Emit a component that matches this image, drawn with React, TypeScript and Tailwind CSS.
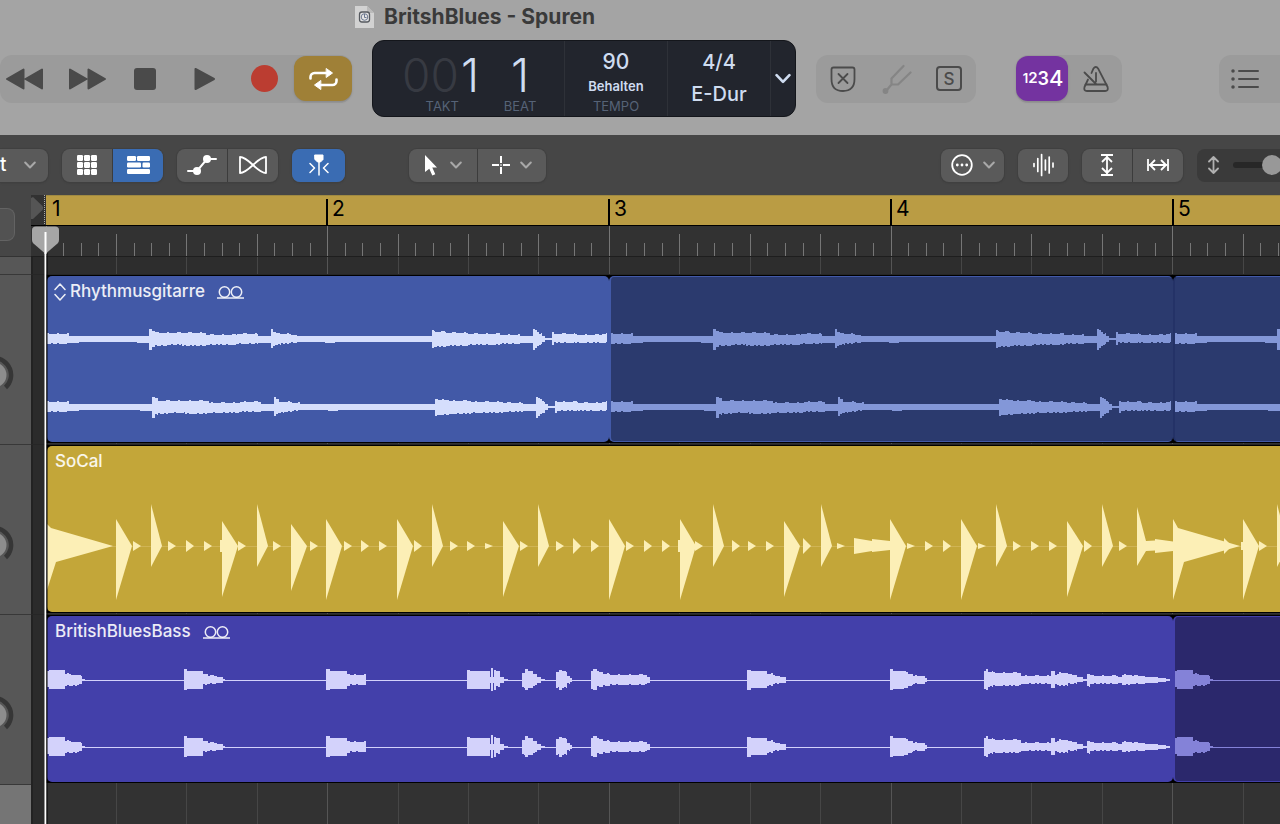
import type { ReactNode } from 'react'
import clsx from 'clsx'

type Step = [end: number, up: number, down: number]

const BEAT = 70.42

// Each step runs up to `end`, with a height above and below the centre line.
const GUITAR: Step[] = [
  [2, 5, 6], [22, 5, 5], [32, 3, 4], [90, 3, 3], [102, 3, 4], [105, 10, 11], [108, 8, 8],
  [120, 6, 7], [135, 6, 6], [159, 6, 7], [190, 4, 6], [211, 5, 5], [224, 3, 4], [226, 10, 9],
  [229, 7, 7], [234, 5, 6], [242, 5, 5], [250, 4, 4], [278, 3, 3], [288, 3, 4], [385, 3, 3],
  [388, 8, 9], [399, 7, 8], [421, 6, 7], [453, 5, 6], [473, 4, 5], [486, 3, 4], [488, 10, 11],
  [490, 9, 9], [492, 7, 7], [495, 5, 6], [498, 3, 3], [505, 1, 1], [507, 6, 6], [528, 5, 4],
  [555, 4, 4], [560, 5, 4],
]

const BASS: Step[] = [
  [2, 8, 8], [18, 10, 9], [22, 6, 6], [32, 5, 6], [35, 4, 4], [38, 1, 1], [137, 0, 1],
  [140, 11, 10], [156, 9, 9], [161, 6, 5], [170, 4, 4], [176, 3, 3], [178, 1, 1], [279, 0, 1],
  [283, 11, 10], [300, 9, 9], [303, 6, 6], [319, 5, 5], [420, 0, 1], [423, 10, 9], [443, 9, 9],
  [444, 3, 3], [446, 12, 11], [447, 3, 3], [449, 10, 10], [453, 8, 7], [457, 3, 3], [461, 1, 1],
  [475, 0, 1], [478, 7, 8], [481, 11, 10], [486, 9, 8], [490, 6, 6], [494, 3, 3], [498, 1, 1],
  [509, 0, 1], [512, 8, 8], [515, 10, 10], [520, 8, 8], [523, 4, 4], [525, 2, 2], [544, 0, 1],
  [546, 9, 9], [550, 11, 10], [556, 8, 7], [563, 6, 6], [578, 5, 5], [600, 5, 5], [603, 3, 3],
  [700, 0, 1], [704, 10, 10], [720, 9, 8], [726, 6, 6], [733, 4, 4], [739, 3, 3], [843, 0, 1],
  [846, 11, 10], [857, 9, 9], [861, 8, 8], [866, 6, 6], [878, 4, 4], [880, 2, 2], [937, 0, 1],
  [939, 9, 9], [941, 11, 10], [946, 8, 7], [974, 7, 6], [1004, 4, 4], [1008, 9, 8], [1012, 5, 5],
  [1021, 7, 6], [1030, 5, 4], [1036, 3, 2], [1040, 1, 1], [1043, 6, 7], [1071, 4, 4],
  [1075, 3, 3], [1085, 5, 5], [1098, 4, 4], [1111, 3, 3], [1119, 2, 2], [1123, 1, 1],
]

// x, top and bottom of each hit, measured from the region's left edge and centre line
const KICKS = [
  [69, 27, 54], [175, 25, 51], [244, 22, 45], [279, 27, 54], [350, 27, 54], [456, 25, 51],
  [562, 27, 54], [633, 27, 54], [737, 25, 51], [843, 27, 54], [914, 27, 54], [1020, 25, 51],
  [1196, 27, 54],
]
const SNARES = [104, 210, 385, 491, 666, 774, 949, 1055, 1230]
const HATS = [
  [86, 5], [121, 5], [139, 6], [157, 5], [191, 5], [226, 5], [263, 5], [297, 5], [314, 6],
  [332, 5], [367, 6], [403, 5], [420, 5], [438, 3], [473, 5], [509, 5], [526, 8], [544, 6],
  [579, 5], [597, 6], [615, 6], [648, 5], [685, 6], [701, 5], [719, 5], [756, 8], [790, 3],
  [860, 3], [878, 5], [896, 6], [931, 3], [966, 5], [984, 5], [1002, 5], [1037, 6], [1072, 5],
  [1177, 8], [1212, 5],
]

function wavePath(steps: Step[], cy: number, shift = 0) {
  const top: string[] = []
  const bottom: string[] = []
  let x = 0
  for (const [rawEnd, up, down] of steps) {
    const end = rawEnd > 32 && rawEnd < 550 ? rawEnd + shift : rawEnd
    while (x < end) {
      const next = Math.min(x + 2, end)
      const rough = up > 3 && up < 9
      const u = up + (rough && (x * 7919) % 11 < 3 ? 1 : 0)
      const d = down + (rough && (x * 6101) % 13 < 4 ? -1 : 0)
      top.push(`L${x} ${cy - u}L${next} ${cy - u}`)
      bottom.unshift(`L${next} ${cy + d}L${x} ${cy + d}`)
      x = next
    }
  }
  return `M0 ${cy}${top.join('')}${bottom.join('')}Z`
}

interface WaveformProps {
  steps: Step[]
  centre: number
  className: string
  shift?: number
}

function Waveform({ steps, centre, className, shift = 0 }: WaveformProps) {
  return (
    <svg className={clsx('absolute left-0 h-[166px] w-full', className)} fill="currentColor" aria-hidden="true">
      <path d={wavePath(steps, centre)} />
      <path d={wavePath(steps, 131, shift)} />
    </svg>
  )
}

function DrumWaveform() {
  return (
    <svg className="absolute inset-0 h-full w-full text-[#fcefb6]" fill="currentColor" aria-hidden="true">
      <path d="M0 100.500H1300" stroke="#d0b455" strokeWidth="1" />
      <path d="M0 78 4 82 66 100 9 116 0 144Z" />
      {KICKS.map(([x, up, down]) => (
        <path key={x} d={`M${x} ${100 - up}L${x + 16} 100L${x} ${100 + down}Z`} />
      ))}
      {SNARES.map((x) => (
        <path key={x} d={`M${x} 58L${x + 11} 100L${x} 121Z`} />
      ))}
      {HATS.map(([x, h]) => (
        <path key={x} d={`M${x} ${100 - h}L${x + 8} 100L${x} ${100 + h}Z`} />
      ))}
      <path d="M173 94h3v12h-3ZM631 94h3v12h-3ZM1194 96h3v8h-3Z" />
      <path d="M807 92 825 95V93L843 95V104L825 106V105L807 108Z" />
      <path d="M1090 61 1099 95 1108 94.500V93L1126 95.500V105L1108 107V104.500L1099 105 1090 120Z" />
      <path d="M1126 73 1131 82 1193 100 1137 116 1126 154Z" />
    </svg>
  )
}

function Chevron({ className }: { className?: string }) {
  return (
    <svg className={clsx('h-2 w-3', className)} viewBox="0 0 12 8" fill="none" stroke="currentColor" strokeWidth="2" strokeLinecap="round" strokeLinejoin="round">
      <path d="M1.200 1.500 6 6.500 10.800 1.500" />
    </svg>
  )
}

function LoopIcon() {
  return (
    <svg className="h-4 w-[27px]" viewBox="0 0 27 16" fill="none" stroke="currentColor" strokeWidth="1.500" aria-hidden="true">
      <circle cx="7.500" cy="8" r="5.200" />
      <circle cx="19.500" cy="8" r="5.200" />
      <path d="M0 14h27" />
    </svg>
  )
}

function IconButton({ label, className, children }: { label: string; className?: string; children?: ReactNode }) {
  return (
    <button type="button" aria-label={label} className={clsx('flex shrink-0 items-center justify-center', className)}>
      {children}
    </button>
  )
}

function Transport() {
  return (
    <div className="flex h-12 w-[352px] shrink-0 items-center rounded-xl bg-[#9b9b9b] text-[#4a4a4a]">
      <IconButton label="Zurückspulen" className="h-full w-[58px] justify-start pl-1.5">
        <svg className="h-[22px] w-[37px]" viewBox="0 0 37 22" fill="currentColor" stroke="currentColor" strokeWidth="2" strokeLinejoin="round">
          <path d="M1 11 17.500 1.500v19ZM19.500 11 36 1.500v19Z" />
        </svg>
      </IconButton>
      <IconButton label="Vorspulen" className="h-full w-[58px]">
        <svg className="h-[22px] w-[37px]" viewBox="0 0 37 22" fill="currentColor" stroke="currentColor" strokeWidth="2" strokeLinejoin="round">
          <path d="M17.500 11 1 1.500v19ZM36 11 19.500 1.500v19Z" />
        </svg>
      </IconButton>
      <IconButton label="Stopp" className="h-full w-[58px]">
        <span className="size-[22px] rounded-[3px] bg-[#4a4a4a]" />
      </IconButton>
      <IconButton label="Wiedergabe" className="h-full w-[61px]">
        <svg className="h-[22px] w-[21px]" viewBox="0 0 21 22" fill="currentColor" stroke="currentColor" strokeWidth="2" strokeLinejoin="round">
          <path d="M20 11 1.500 1v20Z" />
        </svg>
      </IconButton>
      <IconButton label="Aufnahme" className="h-full w-[59px]">
        <span className="size-[27px] rounded-full bg-[#bb3d31]" />
      </IconButton>
      <IconButton label="Cycle" className="h-[45px] w-[58px] rounded-xl bg-[#9f8037] text-white shadow">
        <svg className="h-6 w-[29px]" viewBox="0 0 29 24" fill="none" stroke="currentColor" strokeWidth="2.600" strokeLinecap="round" strokeLinejoin="round">
          <path d="M1.500 11.500V10a4 4 0 0 1 4-4H18M27.500 12.500V14a4 4 0 0 1-4 4H11" />
          <path d="M17.500 1.700 23.500 6 17.500 10.300ZM11.500 13.700 5.500 18 11.500 22.300Z" fill="currentColor" strokeWidth="1" />
        </svg>
      </IconButton>
    </div>
  )
}

function Display() {
  return (
    <div className="flex h-[77px] w-[424px] shrink-0 rounded-xl border border-[#14161b] bg-[#22252d] text-[#cfdcf0]">
      <div className="flex w-[192px] border-r border-[#2e3138] pt-[11px]">
        <div className="flex w-[108px] flex-col items-end">
          <div className="flex gap-0.5 pr-0.5 text-[46px] leading-[46px] font-light">
            <span className="text-[#373a42]">00</span>
            <span>1</span>
          </div>
          <span className="pr-[22px] text-[13px] leading-4 text-[#566377]">TAKT</span>
        </div>
        <div className="flex w-[78px] flex-col items-center">
          <div className="text-[46px] leading-[46px] font-light">1</div>
          <span className="text-[13px] leading-4 text-[#566377]">BEAT</span>
        </div>
      </div>
      <div className="flex w-[103px] flex-col items-center border-r border-[#2e3138] pt-[9px]">
        <span className="text-[21px] leading-6 font-medium">90</span>
        <span className="text-[13px] leading-6 font-semibold">Behalten</span>
        <span className="text-[13px] leading-4 text-[#566377]">TEMPO</span>
      </div>
      <div className="flex w-[103px] flex-col items-center gap-2 border-r border-[#2e3138] pt-[9px]">
        <span className="text-[20px] leading-6 font-medium">4/4</span>
        <span className="text-[20px] leading-6 font-medium">E-Dur</span>
      </div>
      <IconButton label="Anzeige wählen" className="flex-1">
        <Chevron className="h-[11px] w-4" />
      </IconButton>
    </div>
  )
}

function WindowHeader() {
  return (
    <header className="h-[135px] overflow-hidden bg-[#a4a4a4]">
      <div className="flex h-[34px] items-center gap-2.5 pl-[355px]">
        <svg className="h-[22px] w-[19px]" viewBox="0 0 19 22" aria-hidden="true">
          <path d="M0 0h12l7 7v15H0Z" fill="#d2d2d2" />
          <path d="M12 0v7h7Z" fill="#bababa" />
          <rect x="4.500" y="6" width="10" height="10" rx="2.500" fill="#e4e4e4" stroke="#55595f" strokeWidth="1.300" />
          <circle cx="9.500" cy="11" r="3.300" fill="none" stroke="#6c7890" />
          <path d="M9.500 8v3.500h2" fill="none" stroke="#6c7890" />
        </svg>
        <h1 className="text-[21px] leading-7 font-bold text-[#3a3a3a]">BritshBlues - Spuren</h1>
      </div>
      <div className="flex items-center pt-1.5">
        <Transport />
        <div className="w-5 shrink-0" />
        <Display />
        <div className="ml-5 flex h-12 w-40 shrink-0 items-center justify-between rounded-xl bg-[#9b9b9b] pr-3.5 pl-[13px] text-[#4b4b4b]">
          <IconButton label="Ersetzen" className="size-7">
            <svg className="size-7" viewBox="0 0 28 28" fill="none" stroke="currentColor" strokeWidth="1.800" strokeLinecap="round">
              <path d="M4.500 2.500h19q2 0 2 2V14q0 12-11.500 12T2.500 14V4.500q0-2 2-2Z" />
              <path d="m9.500 9 9 9M18.500 9l-9 9" />
            </svg>
          </IconButton>
          <IconButton label="Stimmgerät" className="size-[30px] text-[#858585]">
            <svg className="size-[30px]" viewBox="0 0 30 30" fill="none" stroke="currentColor" strokeWidth="2.200" strokeLinecap="round" strokeLinejoin="round">
              <path d="M4 27 9.500 20.500V14.500L21.500 2M9.500 20.500H16L28.500 8.500" />
              <circle cx="3.500" cy="27" r="1.800" fill="currentColor" />
            </svg>
          </IconButton>
          <IconButton label="Solo" className="h-[25px] w-[26px] rounded border-2 border-[#4b4b4b] text-[17px] leading-5 font-medium">
            S
          </IconButton>
        </div>
        <div className="ml-10 flex h-12 w-[106px] shrink-0 items-center rounded-xl bg-[#9b9b9b] text-[#4b4b4b]">
          <IconButton label="Einzähler" className="h-[45px] w-[52px] rounded-xl bg-[#7433a0] pl-0.5 font-semibold text-white shadow">
            <span className="text-[13px]">1</span>
            <span className="text-[15px]">2</span>
            <span className="text-[18px]">3</span>
            <span className="text-[22px] font-medium">4</span>
          </IconButton>
          <IconButton label="Metronom" className="h-full w-14">
            <svg className="size-7" viewBox="0 0 28 28" fill="none" stroke="currentColor" strokeWidth="1.800" strokeLinecap="round" strokeLinejoin="round">
              <path d="M9.500 8 11.300 3.800Q13.800.2 16.300 3.800L25.600 22q1 4-2.500 4H5Q1.500 26 2.500 22L6 14.500" />
              <path d="M3.500 19.500H24.500M2.500 7.500 14.500 19.500M14 8V16.500" />
            </svg>
          </IconButton>
        </div>
        <div className="ml-auto flex h-12 w-[61px] shrink-0 items-center rounded-l-xl bg-[#9b9b9b] pl-3 text-[#4b4b4b]">
          <IconButton label="Listen" className="h-full w-7">
            <svg className="h-5 w-7" viewBox="0 0 28 20" fill="none" stroke="currentColor" strokeWidth="2" strokeLinecap="round">
              <path d="M8 2H27M8 10H27M8 18H27" />
              <path d="M2 2h.01M2 10h.01M2 18h.01" strokeWidth="3.500" />
            </svg>
          </IconButton>
        </div>
      </div>
    </header>
  )
}

function ButtonGroup({ className, children }: { className?: string; children: ReactNode }) {
  return (
    <div className={clsx('flex h-[33px] shrink-0 divide-x divide-[#3c3c3c] overflow-hidden rounded-lg bg-[#5a5a5a] text-white shadow ring-1 ring-[#404040]', className)}>
      {children}
    </div>
  )
}

function Toolbar() {
  return (
    <div className="flex h-[60px] items-center gap-3.5 overflow-hidden bg-[#464646]">
      <ButtonGroup className="w-12 rounded-l-none">
        <button type="button" className="flex w-full items-center justify-between pr-3 text-[19px] font-medium">
          t
          <Chevron className="text-[#a8a8a8]" />
        </button>
      </ButtonGroup>
      <ButtonGroup>
        <IconButton label="Live-Loops" className="w-[51px]">
          <svg className="size-5" viewBox="0 0 20 20" fill="currentColor">
            {[0, 7, 14].map((y) => [0, 7, 14].map((x) => <rect key={`${x}-${y}`} x={x} y={y} width="6" height="6" rx="1.300" />))}
          </svg>
        </IconButton>
        <IconButton label="Spuren" className="w-[50px] bg-[#3a6cb3]">
          <svg className="h-[18px] w-[23px]" viewBox="0 0 23 18" fill="currentColor">
            <rect width="9" height="5" rx="1.200" />
            <rect x="10" width="13" height="5" rx="1.200" />
            <rect y="6.500" width="14" height="5" rx="1.200" />
            <rect x="15.500" y="6.500" width="7.500" height="5" rx="1.200" />
            <rect y="13" width="23" height="5" rx="1.200" />
          </svg>
        </IconButton>
      </ButtonGroup>
      <ButtonGroup>
        <IconButton label="Automation" className="w-[51px]">
          <svg className="h-5 w-[30px]" viewBox="0 0 30 20" fill="none" stroke="currentColor" strokeWidth="2" strokeLinecap="round">
            <path d="M1 16H10L20 4H29" />
            <circle cx="10" cy="16" r="4" fill="currentColor" stroke="none" />
            <circle cx="20" cy="4" r="4" fill="currentColor" stroke="none" />
          </svg>
        </IconButton>
        <IconButton label="Flex" className="w-[50px]">
          <svg className="h-[18px] w-7" viewBox="0 0 28 18" fill="none" stroke="currentColor" strokeWidth="1.800" strokeLinejoin="round">
            <path d="M1 1V17C10 17 18 1 27 1V17C18 17 10 1 1 1Z" />
          </svg>
        </IconButton>
      </ButtonGroup>
      <ButtonGroup>
        <IconButton label="Catch-Modus" className="w-[53px] bg-[#3a6cb3]">
          <svg className="h-[22px] w-5" viewBox="0 0 20 22" fill="none" stroke="currentColor" strokeWidth="1.500" strokeLinecap="round" strokeLinejoin="round">
            <path d="M6 1h8v4.500L11.500 8H8.500L6 5.500Z" fill="currentColor" strokeWidth="1" />
            <path d="M10 6V21M1 9.500 5.500 14 1 18.500M19 9.500 14.500 14 19 18.500" />
          </svg>
        </IconButton>
      </ButtonGroup>
      <ButtonGroup className="ml-[50px]">
        <IconButton label="Zeigerwerkzeug" className="w-[69px] gap-3">
          <svg className="h-[21px] w-3.5" viewBox="0 0 14 21" fill="currentColor">
            <path d="M1 0 13 12.500H8.300L11.300 19.200 8.300 20.500 5.300 13.800 1 17Z" />
          </svg>
          <Chevron className="text-[#a8a8a8]" />
        </IconButton>
        <IconButton label="Fadenkreuzwerkzeug" className="w-[68px] gap-2.5">
          <svg className="size-[18px]" viewBox="0 0 18 18" fill="none" stroke="currentColor" strokeWidth="2">
            <path d="M9 0V7M9 11v7M0 9H7M11 9h7M8.500 9h1" />
          </svg>
          <Chevron className="text-[#a8a8a8]" />
        </IconButton>
      </ButtonGroup>
      <ButtonGroup className="ml-auto">
        <IconButton label="Weitere Optionen" className="w-[63px] gap-2.5">
          <svg className="size-[22px]" viewBox="0 0 22 22" fill="none" stroke="currentColor" strokeWidth="1.800" strokeLinecap="round">
            <circle cx="11" cy="11" r="9.800" />
            <path d="M6.300 11h.01M11 11h.01M15.700 11h.01" strokeWidth="2.800" />
          </svg>
          <Chevron className="text-[#a8a8a8]" />
        </IconButton>
      </ButtonGroup>
      <ButtonGroup>
        <IconButton label="Wellenform-Zoom" className="w-[50px]">
          <svg className="h-6 w-[21px]" viewBox="0 0 21 24" fill="none" stroke="currentColor" strokeWidth="1.700" strokeLinecap="round">
            <path d="M1 10.500v3M4.800 5.500v13M8.600 1.500v21M12.400 7v10M16.200 4v16M20 10v4" />
          </svg>
        </IconButton>
      </ButtonGroup>
      <ButtonGroup>
        <IconButton label="Vertikal einpassen" className="w-[51px]">
          <svg className="h-[22px] w-3" viewBox="0 0 12 22" fill="none" stroke="currentColor" strokeWidth="1.800">
            <path d="M0 1H12M0 21H12M6 2V20M1 8 6 3 11 8M1 14 6 19 11 14" />
          </svg>
        </IconButton>
        <IconButton label="Horizontal einpassen" className="w-[50px]">
          <svg className="h-3 w-[22px]" viewBox="0 0 22 12" fill="none" stroke="currentColor" strokeWidth="1.800">
            <path d="M1 0V12M21 0V12M2 6H20M8 1 3 6 8 11M14 1 19 6 14 11" />
          </svg>
        </IconButton>
      </ButtonGroup>
      <label className="flex h-[33px] w-[83px] shrink-0 items-center gap-3.5 overflow-hidden rounded-l-lg bg-[#3a3a3a] pl-[11px] text-[#b0b0b0]">
        <svg className="h-[18px] w-[11px] shrink-0" viewBox="0 0 11 18" fill="none" stroke="currentColor" strokeWidth="1.800" strokeLinecap="round" strokeLinejoin="round">
          <path d="M5.500 1V17M1 5.500 5.500 1 10 5.500M1 12.500 5.500 17 10 12.500" />
        </svg>
        <input
          type="range"
          aria-label="Vertikaler Zoom"
          min={0}
          max={80}
          defaultValue={29}
          className="h-1.5 w-[100px] shrink-0 appearance-none rounded-full bg-[#272727] [&::-webkit-slider-thumb]:size-5 [&::-webkit-slider-thumb]:appearance-none [&::-webkit-slider-thumb]:rounded-full [&::-webkit-slider-thumb]:bg-[#989898]"
        />
      </label>
    </div>
  )
}

function TrackHeaders() {
  return (
    <aside className="flex w-[31px] shrink-0 flex-col overflow-hidden bg-[#575757]">
      <div className="h-[62px] border-b border-[#333] bg-[#464646] pt-[13px]">
        <IconButton label="Spur hinzufügen" className="h-[33px] w-[15px] rounded-r-lg border border-l-0 border-[#636363] bg-[#525252]" />
      </div>
      <div className="h-[17px]" />
      {['Rhythmusgitarre', 'SoCal', 'BritishBluesBass'].map((name) => (
        <div key={name} className="flex h-[170px] items-center border-t border-[#383838] pt-[31px]">
          <svg className="h-10 w-[15px]" viewBox="0 0 15 40" role="img" aria-label={`Lautstärke ${name}`}>
            <circle cx="-6" cy="20" r="12.500" fill="#8d8d8d" />
            <path d="M-6 3.200A16.800 16.800 0 0 1 5.500 32.500" fill="none" stroke="#363636" strokeWidth="4.500" />
          </svg>
        </div>
      ))}
      <div className="flex-1 border-t border-[#383838] bg-[#757575]" />
    </aside>
  )
}

const beats = Array.from({ length: 60 }, (_, i) => i)

// Left edge of the pixel column that holds the given beat
const beatX = (beat: number) => Math.floor(15 + beat * BEAT) + 0.5

function Ruler() {
  return (
    <div>
      <div className="flex h-[31px] border-b border-black bg-[#323232]">
        <svg className="h-[30px] w-[15px] shrink-0" viewBox="0 0 15 30" aria-hidden="true">
          <path d="M0 3 2 2 11.500 11Q13 13 11.500 15L2 24 0 24Z" fill="#555" />
          <path d="M13.500 0V30" stroke="#aaa" strokeDasharray="1 1" />
        </svg>
        <div className="flex flex-1 overflow-hidden border-t border-[#a08a42] bg-[#ba9c44] text-[21px] leading-[26px] text-black">
          <span className="w-[280px] shrink-0 pl-1.5">1</span>
          {[2, 3, 4, 5].map((bar) => (
            <span key={bar} className="mt-[3px] w-[282px] shrink-0 border-l-2 border-black pl-1 leading-5">
              {bar}
            </span>
          ))}
        </div>
      </div>
      <svg className="block h-[31px] w-full" shapeRendering="crispEdges" aria-hidden="true">
        <rect width="100%" height="31" fill="#323232" />
        <rect y="30" width="100%" height="1" fill="#1e1e1e" />
        {beats.map((b) => (
          <g key={b} stroke="#767676">
            <path d={`M${beatX(b)} ${b % 4 === 0 ? 0 : 8}V30`} />
            {[1, 2, 3].map((s) => (
              <path key={s} d={`M${beatX(b + s / 4)} 17V30`} />
            ))}
          </g>
        ))}
      </svg>
    </div>
  )
}

function RegionTitle({ name, loop }: { name: string; loop?: boolean }) {
  return (
    <div className="relative flex h-8 items-center gap-3 text-[17px] font-medium text-white/90">
      {name}
      {loop && <LoopIcon />}
    </div>
  )
}

function Lane({ children }: { children: ReactNode }) {
  return (
    <div className="flex h-[170px] border-t border-[#262626] pb-px pl-[15px]">
      <div className="flex flex-1 overflow-hidden bg-black py-px pl-px">{children}</div>
    </div>
  )
}

function Timeline() {
  return (
    <main className="relative flex min-w-0 flex-1 flex-col overflow-hidden bg-[#323232]">
      <svg className="absolute inset-0 h-full w-full" shapeRendering="crispEdges" aria-hidden="true">
        <rect y="62" width="100%" height="18" fill="#2d2d2d" />
        {beats.map((b) => (
          <path key={b} d={`M${beatX(b)} 62V4000`} stroke={b % 4 === 0 ? '#555' : '#464646'} />
        ))}
        <rect y="62" width="15" height="100%" fill="#2b2b2b" />
        <rect width="2" height="100%" fill="#222" />
      </svg>
      <div className="relative">
        <Ruler />
        <div className="h-[17px]" />
        <Lane>
          <div className="relative w-[562px] shrink-0 rounded-[5px] bg-[#4259a7] pl-[7px]">
            <Waveform steps={GUITAR} centre={63} shift={3} className="top-0 text-[#d5defc]" />
            <div className="flex items-center gap-1 text-white/90">
              <svg className="h-[18px] w-3" viewBox="0 0 12 18" fill="none" stroke="currentColor" strokeWidth="1.500" strokeLinecap="round" strokeLinejoin="round">
                <path d="M1 6.500 6 1 11 6.500M1 11.500 6 17 11 11.500" />
              </svg>
              <RegionTitle name="Rhythmusgitarre" loop />
            </div>
          </div>
          <div className="relative w-[564px] shrink-0 rounded-[5px] border border-l-2 border-[#4259a7] border-r-[#2b3a6e] bg-[#2b3a6e]">
            <Waveform steps={GUITAR} centre={63} shift={3} className="-top-px text-[#8397d8]" />
          </div>
          <div className="relative flex-1 rounded-l-[5px] border-y border-l-2 border-[#4259a7] border-l-[#243267] bg-[#2b3a6e]">
            <Waveform steps={GUITAR} centre={63} shift={3} className="-top-px text-[#8397d8]" />
          </div>
        </Lane>
        <Lane>
          <div className="relative flex-1 rounded-l-[5px] bg-[#c3a639] pl-2">
            <DrumWaveform />
            <RegionTitle name="SoCal" />
          </div>
        </Lane>
        <Lane>
          <div className="relative w-[1126px] shrink-0 rounded-[5px] bg-[#4340aa] pl-2">
            <Waveform steps={BASS} centre={64} className="top-0 text-[#d3d2fb]" />
            <RegionTitle name="BritishBluesBass" loop />
          </div>
          <div className="relative flex-1 rounded-l-[5px] border-y border-l-2 border-[#4340aa] bg-[#2b286c]">
            <Waveform steps={BASS} centre={64} className="-top-px text-[#8482d8]" />
          </div>
        </Lane>
      </div>
      <svg className="absolute top-[31px] left-0 h-full w-[30px]" aria-hidden="true">
        <path d="M13.500 22H15.500V4000H13.500Z" fill="#fff" />
        <path d="M16 27V4000" stroke="#000" />
        <path d="M5 .5H24Q28 .5 28 4V14Q28 16 26.500 17.500L15.500 27H13.500L2.500 17.500Q1 16 1 14V4Q1 .5 5 .5Z" fill="#a6a6a6" />
        <path d="M14.500 6V28" stroke="#fff" strokeWidth="2" />
      </svg>
    </main>
  )
}

export default function App() {
  return (
    <div className="flex min-h-screen flex-col overflow-hidden font-['Inter','Liberation_Sans',sans-serif]">
      <WindowHeader />
      <Toolbar />
      <div className="flex flex-1">
        <TrackHeaders />
        <Timeline />
      </div>
    </div>
  )
}
